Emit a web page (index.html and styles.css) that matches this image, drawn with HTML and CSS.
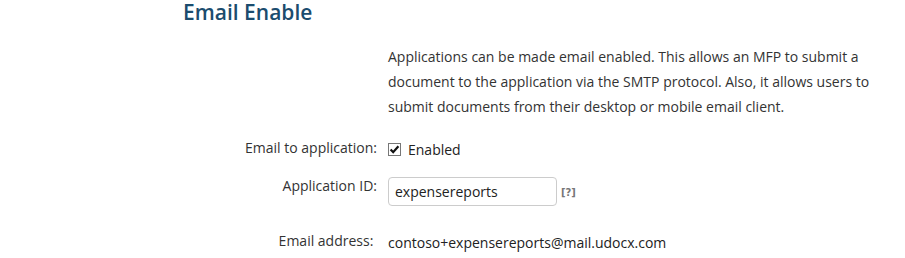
FILE: index.html
```html
<!DOCTYPE HTML>
<html>
<head>
<meta charset="UTF-8" />
<title>Email Enable</title>
<link rel="stylesheet" href="styles.css">
</head>
<body>
<div class="page">
	<h2 class="title">Email Enable</h2>

	<div class="form">
		<div class="label"></div>
		<div class="value desc">Applications can be made email enabled. This allows an MFP to submit a document to the application via the SMTP protocol. Also, it allows users to submit documents from their desktop or mobile email client.</div>

		<div class="label row1">Email to application:</div>
		<div class="value row1">
			<span class="check">
				<svg width="13" height="13" viewBox="0 0 13 13"><rect x="0.5" y="0.5" width="12" height="12" fill="#fff" stroke="#777"/><path d="M2.6 6.4 L5.2 9.2 L10.4 3.2" fill="none" stroke="#111" stroke-width="2.2"/></svg>
			</span>
			<span>Enabled</span>
		</div>

		<div class="label row2">Application ID:</div>
		<div class="value row2">
			<input type="text" class="field" value="expensereports">
			<span class="help">[?]</span>
		</div>

		<div class="label row3">Email address:&nbsp;</div>
		<div class="value row3">contoso+expensereports@mail.udocx.com</div>
	</div>
</div>
</body>
</html>
```

FILE: styles.css
```css
html,
body {
	margin: 0;
	padding: 0;
	background: #fff;
}

body {
	font-family: "Open Sans", "Liberation Sans", sans-serif;
	font-size: 14px;
	color: #333;
}

.page {
	width: 905px;
}

.title {
	margin: 0 0 0 183px;
	font-size: 21px;
	font-weight: 600;
	line-height: 24px;
	color: #1b4c6e;
}

.form {
	display: grid;
	grid-template-columns: 377px 500px;
	column-gap: 11px;
	align-items: center;
	margin-top: 20px;
}

.label {
	text-align: right;
	color: #333;
}

.value {
	display: flex;
	align-items: center;
	color: #222;
}

.desc {
	display: block;
	line-height: 25px;
	color: #333;
}

.row1 {
	margin-top: 19px;
	height: 22px;
}

.row2 {
	margin-top: 16px;
	height: 30px;
}

.row3 {
	margin-top: 25px;
	height: 22px;
}

.check {
	display: flex;
	width: 13px;
	height: 13px;
	margin-right: 7px;
}

.field {
	box-sizing: border-box;
	width: 169px;
	height: 29px;
	padding: 0 6px;
	border: 1px solid #ccc;
	border-radius: 4px;
	font-family: inherit;
	font-size: 14px;
	color: #222;
	outline: none;
}

.help {
	margin-left: 4px;
	margin-top: 2px;
	font-family: "DejaVu Sans", sans-serif;
	font-size: 10px;
	font-weight: 700;
	color: #777;
}
```
